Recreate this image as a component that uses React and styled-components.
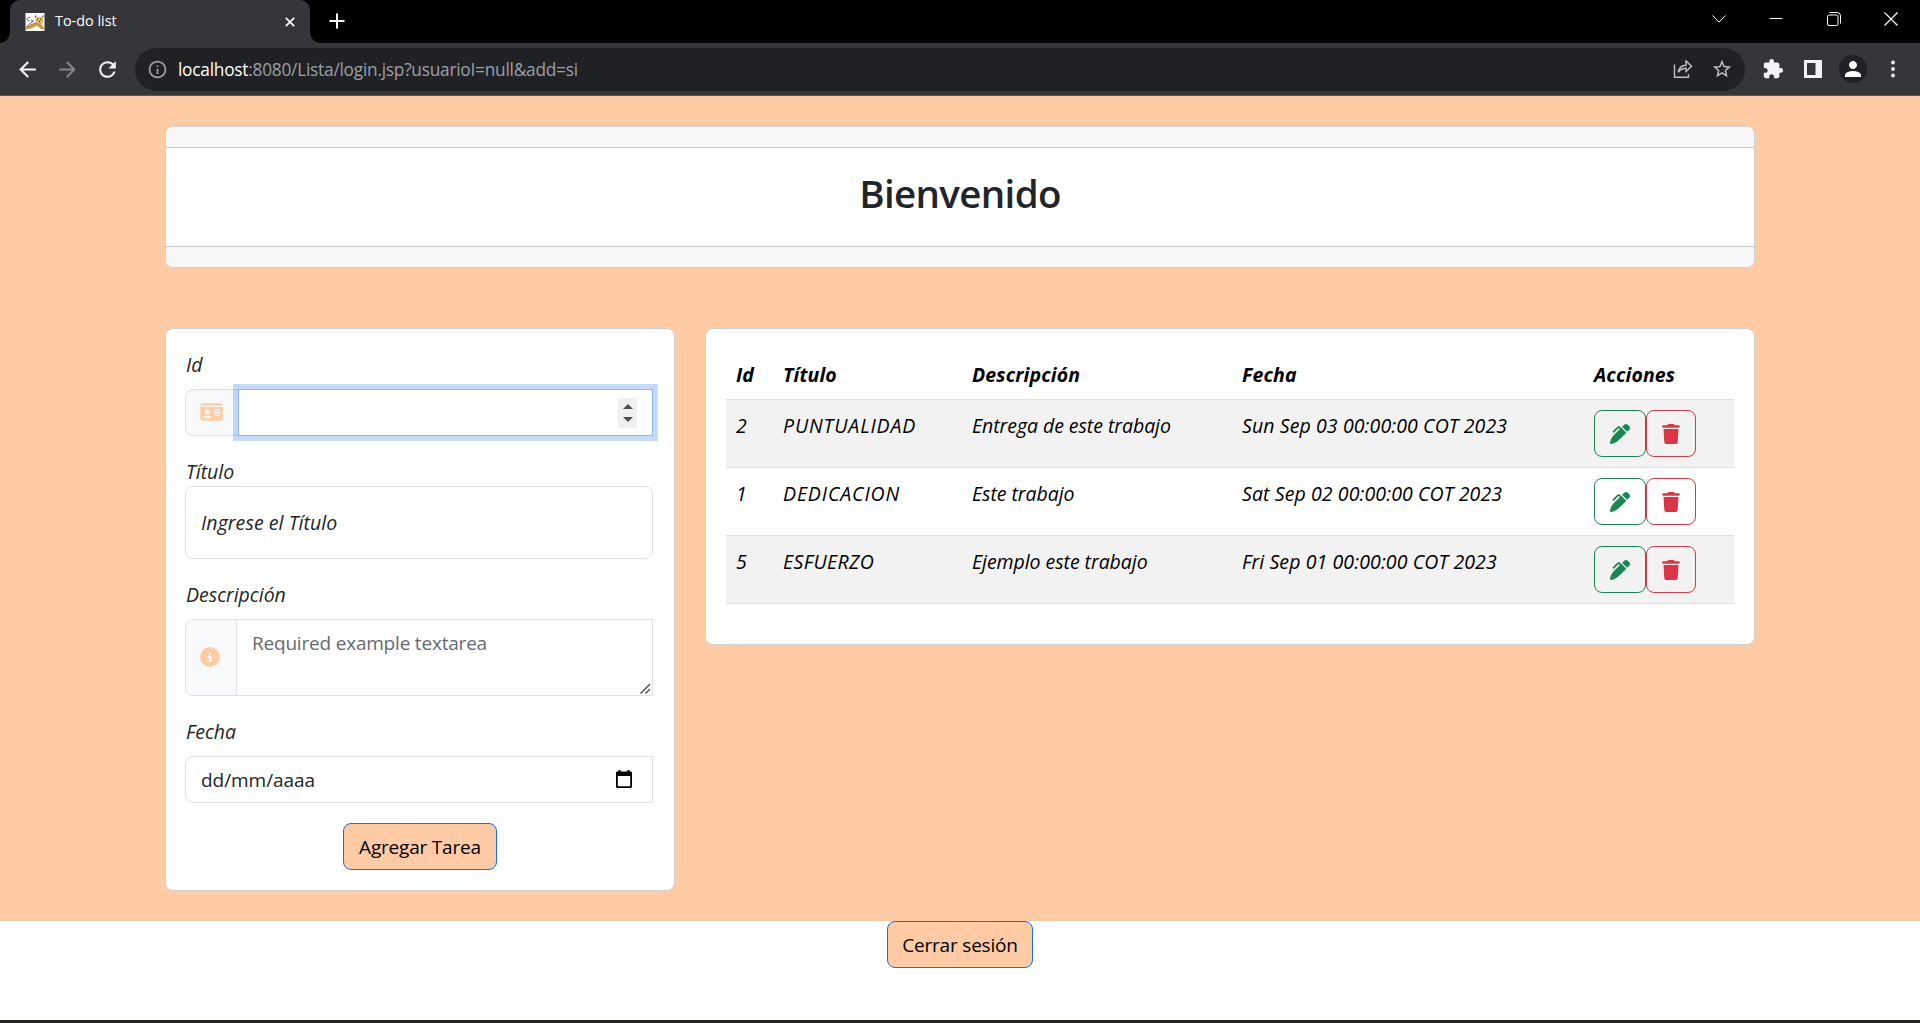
import React from "react";
import styled, { createGlobalStyle, css } from "styled-components";
import { FaIdCard, FaCircleInfo, FaPenClip, FaTrash } from "react-icons/fa6";
import { MdArrowBack, MdArrowForward, MdRefresh, MdInfoOutline, MdStarBorder, MdExtension, MdPerson } from "react-icons/md";

const Global = createGlobalStyle`
  *, *::before, *::after { box-sizing: border-box; }
  body {
    margin: 0;
    background: #fff;
    color: #212529;
    font-family: "Open Sans", "Noto Sans", sans-serif;
    font-size: 19px;
    line-height: 30px;
    overflow: hidden;
  }
  button { font: inherit; color: inherit; margin: 0; }
`;

const Window = styled.div`
  display: flex;
  flex-direction: column;
  height: 1023px;
  width: 1920px;
`;

/* Browser frame */
const TabStrip = styled.div`
  display: flex;
  align-items: flex-start;
  height: 43px;
  padding-left: 10px;
  background: #000;
`;
const Tab = styled.div`
  position: relative;
  display: flex;
  align-items: center;
  width: 300px;
  height: 43px;
  padding: 0 15px;
  background: #35363a;
  border-radius: 10px 10px 0 0;
  color: #fff;
  &::before, &::after {
    content: "";
    position: absolute;
    bottom: 0;
    width: 10px;
    height: 10px;
  }
  &::before { left: -10px; background: radial-gradient(circle at 0 0, #000 9.5px, #35363a 10px); }
  &::after { right: -10px; background: radial-gradient(circle at 100% 0, #000 9.5px, #35363a 10px); }
`;
const TabTitle = styled.span`
  flex: 1;
  margin-left: 10px;
  padding-bottom: 2px;
  font-size: 14.4px;
`;
const NewTab = styled.div`
  display: flex;
  margin: 13px 0 0 19px;
`;
const WindowControls = styled.div`
  display: flex;
  align-items: center;
  gap: 43.5px;
  margin: 12px 22px 0 auto;
`;
const Toolbar = styled.div`
  display: flex;
  align-items: center;
  height: 53px;
  padding-left: 15px;
  background: #35363a;
  border-bottom: 1px solid #56575b;
  color: #f1f3f4;
`;
const NavButtons = styled.div`
  display: flex;
  flex: none;
  gap: 15px;
  width: 120px;
`;
const NavIcon = styled.div`
  display: flex;
  width: 25px;
  height: 25px;
  font-size: 25px;
  color: ${(p) => (p.$off ? "#85868a" : "#f1f3f4")};
`;
const Omnibox = styled.div`
  display: flex;
  flex: none;
  align-items: center;
  width: 1610px;
  height: 43px;
  padding: 0 12px;
  border-radius: 22px;
  background: #202124;
  color: #9aa0a6;
  font-size: 21px;
`;
const Url = styled.div`
  flex: 1;
  margin-left: 10px;
  padding-top: 1px;
  font-size: 17.3px;
  letter-spacing: -0.24px;
  color: #9aa0a6;
  b { font-weight: 400; color: #fff; }
`;
const OmniActions = styled.div`
  display: flex;
  align-items: center;
  gap: 18px;
  color: #bdc1c6;
`;
const ToolbarActions = styled.div`
  display: flex;
  align-items: center;
  flex: 1;
  padding-left: 17px;
`;
const ActionSlot = styled.div`
  display: flex;
  flex: none;
  justify-content: center;
  width: ${(p) => p.$w}px;
`;
const Avatar = styled.div`
  display: flex;
  flex: none;
  align-items: center;
  justify-content: center;
  width: 28px;
  height: 28px;
  border-radius: 50%;
  background: #202124;
  color: #fff;
`;

/* Page */
const Hero = styled.main`
  height: 825px;
  padding: 30px 165px;
  background: #ffcba4;
`;
const Card = styled.section`
  background: #fff;
  border: 1px solid #d0d0d1;
  border-radius: 8px;
`;
const WelcomeCard = styled(Card)`
  height: 142px;
  overflow: hidden;
`;
const CardBand = styled.div`
  height: 21px;
  background: #f7f7f7;
  border: 0 solid #cacaca;
  border-width: ${(p) => (p.$foot ? "1px 0 0" : "0 0 1px")};
`;
const Title = styled.h1`
  margin: 0;
  height: 98px;
  padding-top: 21px;
  text-align: center;
  font-weight: 600;
  font-size: 38.5px;
  line-height: 48px;
  letter-spacing: -0.65px;
`;
const Columns = styled.div`
  display: grid;
  grid-template-columns: 510px 1050px;
  gap: 30px;
  align-items: start;
  margin-top: 60px;
`;
const FormCard = styled(Card)`
  display: flex;
  flex-direction: column;
  height: 563px;
  padding: 20px 20px 20px 19px;
`;
const italic = css`
  font-style: italic;
  font-size: 19.5px;
`;
const Label = styled.label`
  ${italic}
  display: block;
  height: ${(p) => p.$h}px;
  padding: ${(p) => p.$top || 1}px 0 0 1px;
`;
const control = css`
  background: #fff;
  border: 1px solid #dee2e6;
`;
const Group = styled.div`
  display: flex;
  width: 468px;
  height: ${(p) => p.$h}px;
  margin-bottom: ${(p) => p.$mb}px;
`;
const Addon = styled.div`
  display: flex;
  align-items: center;
  width: ${(p) => p.$w}px;
  padding: 0 0 1px 14px;
  background: #f8f9fa;
  border: 1px solid #dee2e6;
  border-right-width: ${(p) => (p.$open ? 0 : 1)}px;
  border-radius: 8px 0 0 8px;
  color: #ffcba4;
  font-size: 20px;
`;
const IdIcon = styled(FaIdCard)`
  width: 23px;
  height: 20px;
`;
const NumberField = styled.div`
  ${control}
  flex: 1;
  display: flex;
  align-items: center;
  justify-content: flex-end;
  padding-right: 15px;
  border-color: #86b7fe;
  box-shadow: 0 0 0 5px rgba(13, 110, 253, 0.25);
`;
const Spinner = styled.div`
  display: flex;
  flex-direction: column;
  align-items: center;
  justify-content: center;
  gap: 8px;
  width: 19px;
  height: 30px;
  background: #f0f0f0;
`;
const TitleField = styled.div`
  ${control}
  ${italic}
  width: 468px;
  height: 73px;
  margin-bottom: 19px;
  padding: 21px 15px;
  border-radius: 8px;
  letter-spacing: 0.07px;
`;
const TextArea = styled.div`
  ${control}
  flex: 1;
  display: flex;
  justify-content: space-between;
  padding: 8px 1px 1px 15px;
  border-left: 0;
  color: #656b71;
  letter-spacing: -0.2px;
  svg { align-self: flex-end; }
`;
const DateField = styled.div`
  ${control}
  display: flex;
  align-items: center;
  justify-content: space-between;
  width: 468px;
  height: 47px;
  padding: 1px 20px 0 15px;
  border-radius: 8px 0 0 8px;
  letter-spacing: -0.05px;
  svg { margin-bottom: 2px; }
`;
const PeachButton = styled.button`
  display: block;
  width: ${(p) => p.$w}px;
  height: 47px;
  flex: none;
  padding: 1px 0 0;
  background: #ffcba4;
  border: 1px solid #0d6efd;
  border-radius: 8px;
  color: #000;
  text-align: center;
  white-space: nowrap;
  letter-spacing: -0.2px;
`;
const SubmitRow = styled.div`
  display: flex;
  justify-content: center;
  padding: 20px 0 0 1px;
`;
const TableCard = styled(Card)`
  height: 317px;
  padding: 20px;
`;
const Table = styled.table`
  ${italic}
  width: 1008px;
  table-layout: fixed;
  border-collapse: separate;
  border-spacing: 0;
  color: #000;
`;
const Th = styled.th`
  width: ${(p) => p.$w}px;
  height: 51px;
  padding: 11px 0 9px 10px;
  border-bottom: 1px solid #dee0e2;
  text-align: left;
  font-weight: 700;
  letter-spacing: 0.13px;
`;
const Td = styled.td`
  height: 68px;
  padding: ${(p) => (p.$actions ? "10px 0 10px 10px" : "11px 0 9px 10px")};
  border-bottom: 1px solid #dedfe0;
  vertical-align: top;
  white-space: nowrap;
  letter-spacing: ${(p) => p.$track || 0}px;
`;
const Tr = styled.tr`
  &:nth-child(odd) { background: #f2f2f2; }
`;
const Actions = styled.div`
  display: flex;
`;
const IconButton = styled.button`
  display: flex;
  align-items: center;
  justify-content: center;
  width: ${(p) => p.$w}px;
  height: 47px;
  padding: 1px 0 0;
  background: transparent;
  border: 1px solid ${(p) => p.$color};
  border-radius: 8px;
  color: ${(p) => p.$color};
  font-size: 20px;
`;
const Footer = styled.footer`
  display: flex;
  justify-content: center;
  flex: 1;
`;
const ScreenEdge = styled.div`
  height: 3px;
  background: #24231f;
`;

const tasks = [
  { id: 2, title: "PUNTUALIDAD", track: 0.88, text: "Entrega de este trabajo", date: "Sun Sep 03 00:00:00 COT 2023" },
  { id: 1, title: "DEDICACION", track: 0.88, text: "Este trabajo", date: "Sat Sep 02 00:00:00 COT 2023" },
  { id: 5, title: "ESFUERZO", track: 0.4, text: "Ejemplo este trabajo", date: "Fri Sep 01 00:00:00 COT 2023" },
];

const Favicon = () => (
  <svg width="20" height="20" viewBox="0 0 20 20">
    <path d="M.5 1h19v18H.5z" fill="#fff" />
    <path d="M10.500 4l1.800 1.500h3.400L18 4v4.500c0 2-1 3-2 3.500l3 4v1.500l-3-.5-4-3.500-5 2.500-5 1.500H1v-1.500l5-4 5-2z" fill="#c8963e" />
    <path d="M10.500 4l1.800 1.500h3.400L18 4v4.500c0 2-1.500 3-3.500 3s-4-1-4-3z" fill="#e2bd68" />
    <path d="M9 8.500 5.500 11 1 15.500M5 5.500C1.500 5 1 9 4.500 9M6 7.500l1.500 2" stroke="#51504c" fill="none" />
    <path d="M10.500 3.500v1.500M18 3.500v1.500M12 7.200h1.300M15.200 7.200h1.300M13.700 9.500h1.200" stroke="#3a3020" />
  </svg>
);

const Stroke = ({ w, h, d, sw = 1, c = "#fff" }) => (
  <svg width={w} height={h} viewBox={`0 0 ${w} ${h}`} fill="none" stroke={c} strokeWidth={sw}>
    <path d={d} />
  </svg>
);

export default function App() {
  return (
    <Window>
      <Global />
      <TabStrip>
        <Tab>
          <Favicon />
          <TabTitle>To-do list</TabTitle>
          <Stroke w={10} h={10} sw={1.7} d="M.8.8l8.4 8.4M9.2.8.8 9.2" />
        </Tab>
        <NewTab>
          <Stroke w={16} h={16} sw={2} d="M8 .5v15M.5 8h15" />
        </NewTab>
        <WindowControls>
          <Stroke w={14} h={14} d="M.5 3.500 7 10l6.500-6.500" />
          <Stroke w={14} h={14} d="M.5 6.500h13" />
          <Stroke w={14} h={14} d="M2.500.5H10q3.500 0 3.500 3.500v7.500M2.500 3h7Q11 3 11 4.500v7.500q0 1.500-1.500 1.500h-7.500Q.5 13.500.5 12V4.500Q.5 3 2.500 3z" />
          <Stroke w={14} h={14} sw={1.2} d="M.5.5l13 13M13.500.5l-13 13" />
        </WindowControls>
      </TabStrip>
      <Toolbar>
        <NavButtons>
          <NavIcon><MdArrowBack /></NavIcon>
          <NavIcon $off><MdArrowForward /></NavIcon>
          <NavIcon><MdRefresh /></NavIcon>
        </NavButtons>
        <Omnibox>
          <MdInfoOutline />
          <Url><b>localhost</b>:8080/Lista/login.jsp?usuarioI=null&amp;add=si</Url>
          <OmniActions>
            <Stroke w={20} h={20} sw={1.4} c="#bdc1c6" d="M1.500 5.500v12.800h14v-3M5.200 13.200C6 8.500 9 6.500 13 6.300V2l5.500 5.300-5.500 5.200V9.300c-3.800 0-5.500 1-7.800 3.900z" />
            <MdStarBorder size={22} />
          </OmniActions>
        </Omnibox>
        <ToolbarActions>
          <ActionSlot $w={22}><MdExtension size={22} /></ActionSlot>
          <ActionSlot $w={57}>
            <svg width="18" height="18" viewBox="0 0 18 18">
              <path fillRule="evenodd" d="M0 0h18v18H0zM3 3v12h8.500V3z" fill="#f1f3f4" />
            </svg>
          </ActionSlot>
          <ActionSlot $w={24}><Avatar><MdPerson size={24} /></Avatar></ActionSlot>
          <ActionSlot $w={55}>
            <svg width="20" height="18" viewBox="0 0 20 18" fill="#f1f3f4">
              <circle cx="10" cy="2.500" r="1.900" /><circle cx="10" cy="9" r="1.900" /><circle cx="10" cy="15.500" r="1.900" />
            </svg>
          </ActionSlot>
        </ToolbarActions>
      </Toolbar>

      <Hero>
        <WelcomeCard>
          <CardBand />
          <Title>Bienvenido</Title>
          <CardBand $foot />
        </WelcomeCard>
        <Columns>
          <FormCard>
            <Label $h={40}>Id</Label>
            <Group $h={47} $mb={20}>
              <Addon $w={53} $open><IdIcon /></Addon>
              <NumberField>
                <Spinner>
                  <svg width="10" height="5"><path d="M0 5 5 0l5 5z" fill="#4f4f4f" /></svg>
                  <svg width="10" height="5"><path d="M0 0l5 5 5-5z" fill="#4f4f4f" /></svg>
                </Spinner>
              </NumberField>
            </Group>
            <Label $h={30}>Título</Label>
            <TitleField>Ingrese el Título</TitleField>
            <Label $h={41} $top={2}>Descripción</Label>
            <Group $h={77} $mb={20}>
              <Addon $w={52}><FaCircleInfo /></Addon>
              <TextArea>
                Required example textarea
                <Stroke w={11} h={11} sw={1.5} c="#555" d="M.5 10.500l9.500-9.500M5.500 10.500 10 6" />
              </TextArea>
            </Group>
            <Label $h={40}>Fecha</Label>
            <DateField>
              dd/mm/aaaa
              <svg width="16" height="18" viewBox="0 0 16 18">
                <path fillRule="evenodd" d="M0 2.500Q0 1.500 1.500 1.500H2.500V0h2v1.500h7V0h2v1.500h1q1.500 0 1.500 1v14Q16 18 14.500 18h-13Q0 18 0 16.500zM1.800 6v10.200h12.400V6z" fill="#000" />
              </svg>
            </DateField>
            <SubmitRow><PeachButton $w={154}>Agregar Tarea</PeachButton></SubmitRow>
          </FormCard>
          <TableCard>
            <Table>
              <thead>
                <tr>
                  <Th $w={47}>Id</Th>
                  <Th $w={189}>Título</Th>
                  <Th $w={270}>Descripción</Th>
                  <Th $w={352}>Fecha</Th>
                  <Th $w={150}>Acciones</Th>
                </tr>
              </thead>
              <tbody>
                {tasks.map((t) => (
                  <Tr key={t.id}>
                    <Td>{t.id}</Td>
                    <Td $track={t.track}>{t.title}</Td>
                    <Td $track={-0.05}>{t.text}</Td>
                    <Td $track={0.1}>{t.date}</Td>
                    <Td $actions>
                      <Actions>
                        <IconButton $w={52} $color="#198754"><FaPenClip /></IconButton>
                        <IconButton $w={50} $color="#dc3545"><FaTrash /></IconButton>
                      </Actions>
                    </Td>
                  </Tr>
                ))}
              </tbody>
            </Table>
          </TableCard>
        </Columns>
      </Hero>
      <Footer><PeachButton $w={146}>Cerrar sesión</PeachButton></Footer>
      <ScreenEdge />
    </Window>
  );
}
